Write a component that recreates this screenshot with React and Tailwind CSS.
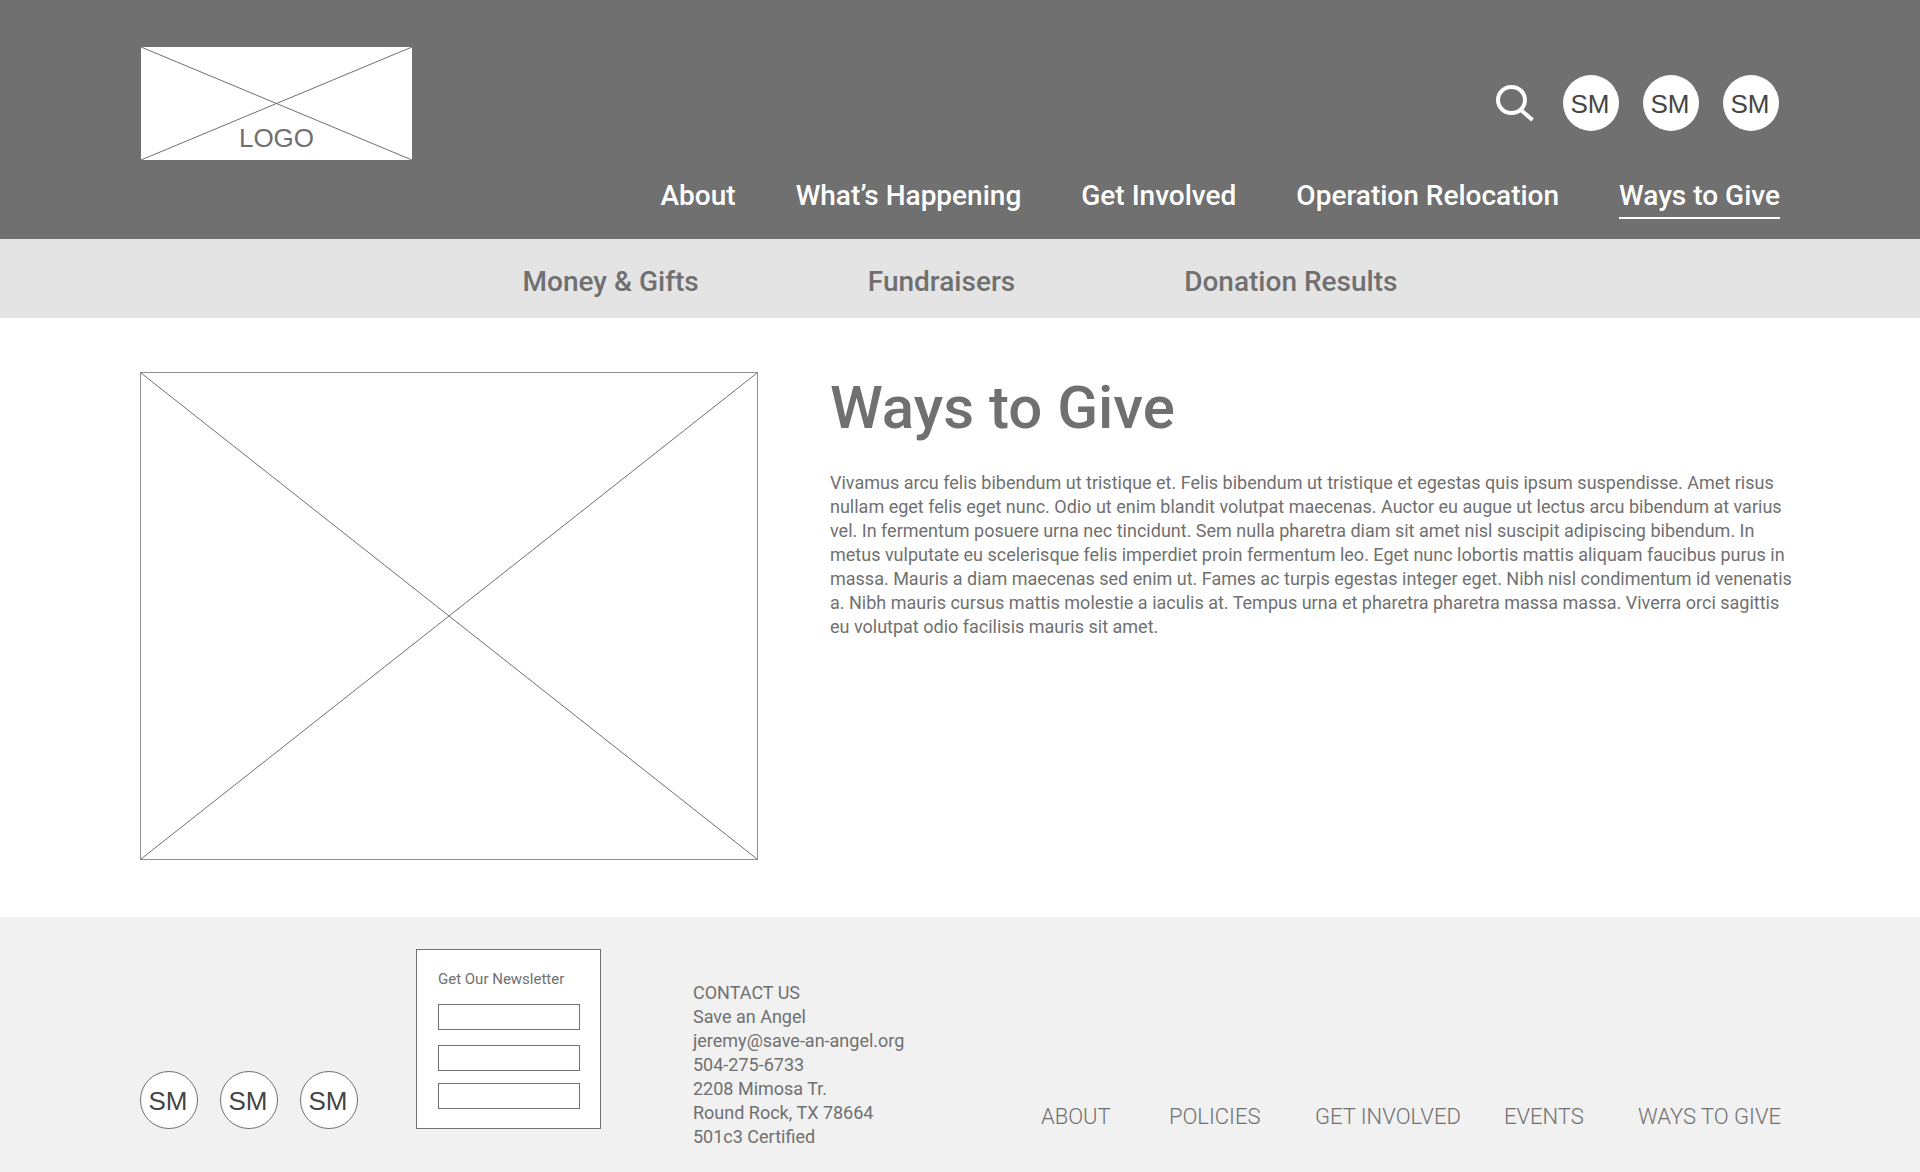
const mainLinks = ["About", "What’s Happening", "Get Involved", "Operation Relocation"];
const subLinks = ["Money & Gifts", "Fundraisers", "Donation Results"];
const footerLinks = ["ABOUT", "POLICIES", "GET INVOLVED", "EVENTS", "WAYS TO GIVE"];
const newsletterFields = ["First name", "Last name", "Email"];

function Cross() {
  return (
    <svg
      className="absolute inset-0 size-full"
      viewBox="0 0 100 100"
      preserveAspectRatio="none"
      stroke="#707070"
      fill="none"
      aria-hidden="true"
    >
      <path d="M0 0 100 100M0 100 100 0" vectorEffect="non-scaling-stroke" />
    </svg>
  );
}

function SocialLinks({ bordered }) {
  return (
    <div className={bordered ? "flex gap-[22px]" : "flex gap-6"}>
      {[1, 2, 3].map((n) => (
        <a
          key={n}
          href="#"
          aria-label={`SM ${n}`}
          className={
            "flex items-center justify-center rounded-full bg-white pt-0.5 pr-0.5 font-['Liberation_Sans',sans-serif] text-[26px] leading-8 text-[#454545] " +
            (bordered ? "size-[58px] border border-[#707070]" : "size-14")
          }
        >
          SM
        </a>
      ))}
    </div>
  );
}

export default function App() {
  return (
    <div className="flex min-h-screen flex-col bg-white font-[Roboto,sans-serif] text-[#707070]">
      <header className="flex items-start justify-between bg-[#707070] px-[140px] pb-5 pt-[47px]">
        <a
          href="#"
          className="relative ml-px flex h-[113px] w-[271px] shrink-0 items-end justify-center bg-white pb-1.5 font-['Liberation_Sans',sans-serif] text-[26px] leading-8"
        >
          <Cross />
          LOGO
        </a>
        <div className="flex flex-col items-end pt-7">
          <div className="flex items-center gap-7 pr-px">
            <button type="button" aria-label="Search">
              <svg width="40" height="40" viewBox="0 0 40 40" fill="none" stroke="#fff" strokeWidth="4">
                <ellipse cx="16.5" cy="17" rx="13.5" ry="13" />
                <path d="m25.5 26.5 12 10.5" />
              </svg>
            </button>
            <SocialLinks />
          </div>
          <nav className="mt-[47px] flex items-start gap-[60px] text-[28px] font-medium leading-9 text-white">
            {mainLinks.map((label) => (
              <a key={label} href="#">
                {label}
              </a>
            ))}
            <a href="#" aria-current="page" className="border-b-2 border-white pb-[3px]">
              Ways to Give
            </a>
          </nav>
        </div>
      </header>

      <nav className="flex justify-center gap-[169px] bg-[#e4e4e4] pb-[18px] pt-[25px] text-[28px] font-medium leading-9">
        {subLinks.map((label) => (
          <a key={label} href="#">
            {label}
          </a>
        ))}
      </nav>

      <main className="flex flex-1 items-start gap-[72px] pb-14 pl-[140px] pr-[120px] pt-[54px]">
        <div className="relative h-[488px] w-[618px] shrink-0 border border-[#909090]">
          <Cross />
        </div>
        <section className="flex-1">
          <h1 className="text-[60px] font-medium leading-[72px]">Ways to Give</h1>
          <p className="mt-[27px] text-lg leading-6">
            Vivamus arcu felis bibendum ut tristique et. Felis bibendum ut tristique et egestas quis ipsum
            suspendisse. Amet risus nullam eget felis eget nunc. Odio ut enim blandit volutpat maecenas. Auctor
            eu augue ut lectus arcu bibendum at varius vel. In fermentum posuere urna nec tincidunt. Sem nulla
            pharetra diam sit amet nisl suscipit adipiscing bibendum. In metus vulputate eu scelerisque felis
            imperdiet proin fermentum leo. Eget nunc lobortis mattis aliquam faucibus purus in massa. Mauris a
            diam maecenas sed enim ut. Fames ac turpis egestas integer eget. Nibh nisl condimentum id venenatis
            a. Nibh mauris cursus mattis molestie a iaculis at. Tempus urna et pharetra pharetra massa massa.
            Viverra orci sagittis eu volutpat odio facilisis mauris sit amet.
          </p>
        </section>
      </main>

      <footer className="flex items-end bg-[#f1f1f1] pb-[43px] pl-[140px] pr-[139px] pt-8">
        <SocialLinks bordered />
        <form className="ml-[58px] w-[185px] border border-[#707070] bg-white pb-[19px] pl-[21px] pr-5 pt-[19px]">
          <h2 className="mb-[15px] text-[15px] leading-5">Get Our Newsletter</h2>
          <div className="flex flex-col gap-3">
            {newsletterFields.map((label) => (
              <input
                key={label}
                type="text"
                aria-label={label}
                className="h-[26px] w-full border border-[#707070] bg-white px-1 text-sm first:mb-[3px]"
              />
            ))}
          </div>
        </form>
        <address className="-mb-5 ml-[92px] text-lg not-italic leading-6">
          <p>CONTACT US</p>
          <p>Save an Angel</p>
          <p>
            <a href="mailto:jeremy@save-an-angel.org">jeremy@save-an-angel.org</a>
          </p>
          <p>504-275-6733</p>
          <p>2208 Mimosa Tr.</p>
          <p>Round Rock, TX 78664</p>
          <p>501c3 Certified</p>
        </address>
        <nav className="ml-auto grid grid-cols-[128px_146px_189px_134px_auto] whitespace-nowrap text-[22px] font-light leading-6">
          {footerLinks.map((label) => (
            <a key={label} href="#">
              {label}
            </a>
          ))}
        </nav>
      </footer>
    </div>
  );
}
